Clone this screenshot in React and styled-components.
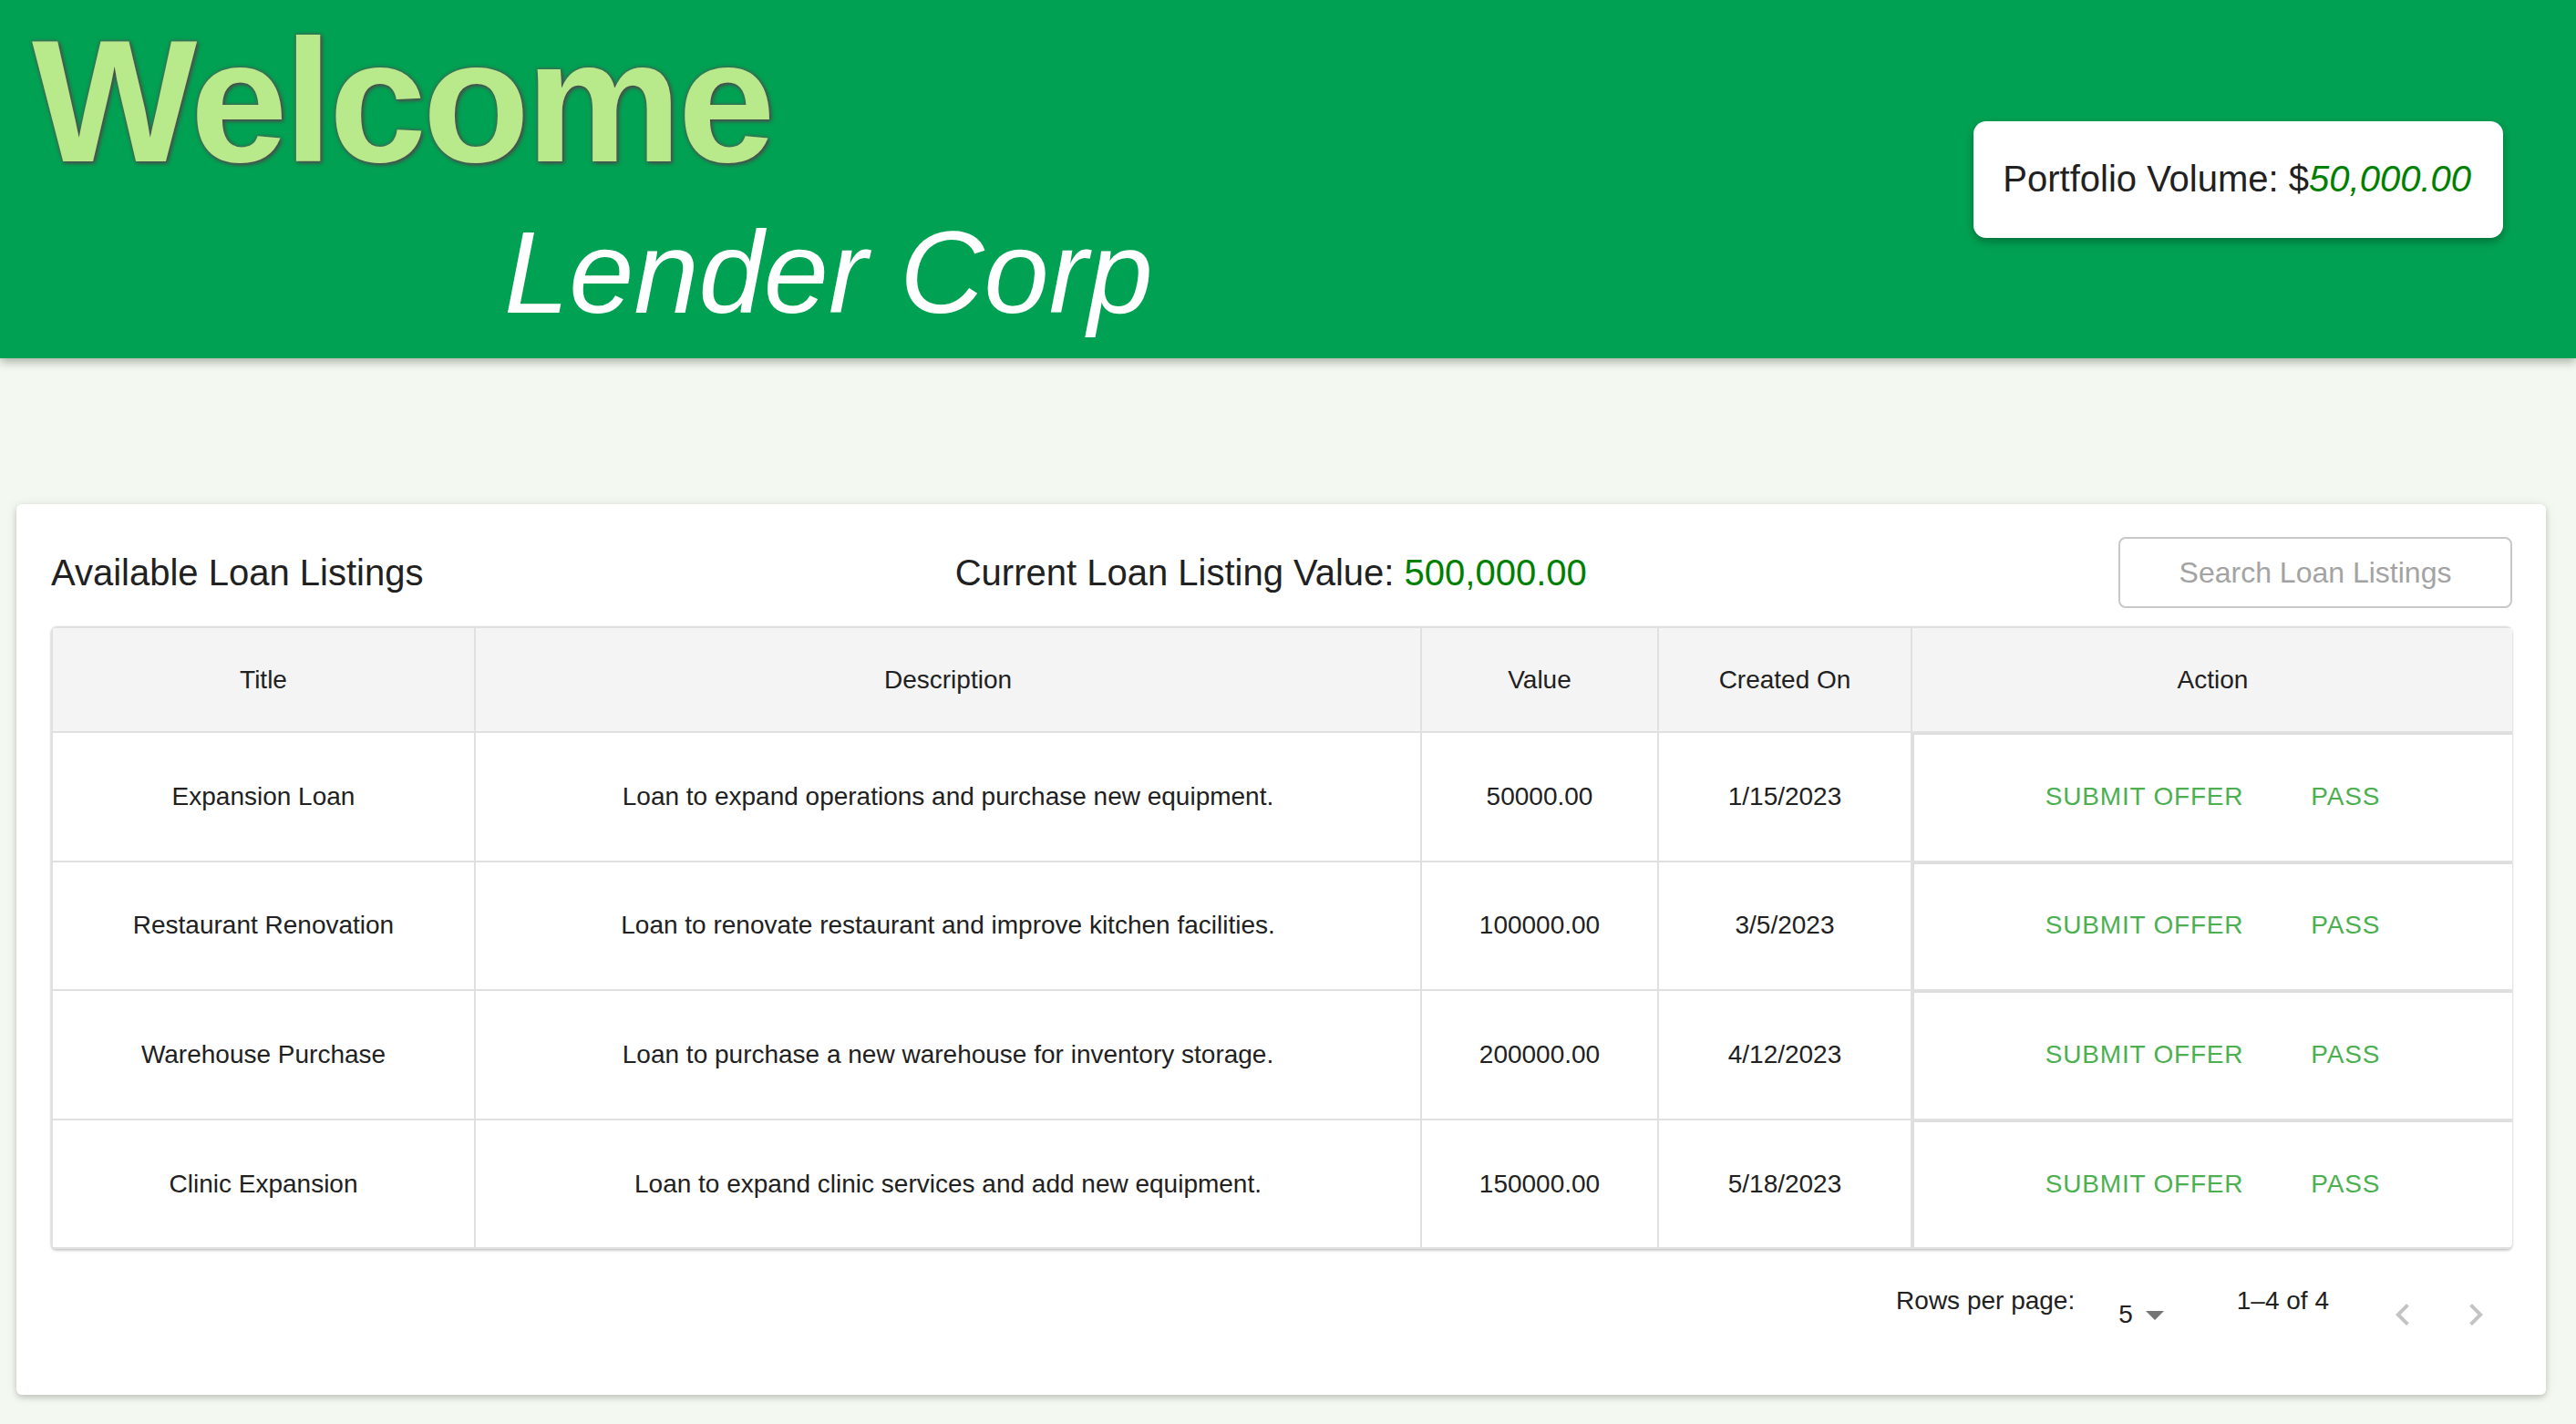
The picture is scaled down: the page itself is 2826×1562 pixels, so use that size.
import React from "react";
import styled, { createGlobalStyle } from "styled-components";

const FONT = `"Liberation Sans", Arial, Helvetica, sans-serif`;

const GlobalStyle = createGlobalStyle`
  html, body {
    margin: 0;
    padding: 0;
    background: #f3f9f0;
  }
  body {
    font-family: ${FONT};
    color: #212121;
  }
  #root {
    min-height: 100vh;
  }
`;

const Page = styled.div`
  min-height: 100vh;
  padding-bottom: 1px;
  box-sizing: border-box;
`;

const Header = styled.header`
  position: relative;
  z-index: 1;
  display: flex;
  align-items: center;
  justify-content: space-between;
  height: 393px;
  box-sizing: border-box;
  padding: 0 80px 0 35px;
  background: #00a152;
  box-shadow: 0 4px 10px rgba(0, 0, 0, 0.3);
`;

const Brand = styled.div`
  display: flex;
  flex-direction: column;
  align-self: stretch;
  padding-top: 15px;
`;

const Welcome = styled.h1`
  margin: 0;
  font-family: ${FONT};
  font-size: 192px;
  line-height: 192px;
  font-weight: 700;
  letter-spacing: -4px;
  color: #b8ea8c;
  text-shadow: 2px 2px 4px #4a4a4a, 0 0 4px #555, 0 0 2px #666;
`;

const Company = styled.div`
  margin: 28px 0 0 518px;
  font-size: 128px;
  line-height: 128px;
  font-style: italic;
  color: #ffffff;
`;

const PortfolioCard = styled.div`
  display: flex;
  align-items: center;
  height: 128px;
  box-sizing: border-box;
  padding: 0 35px 0 32px;
  background: #ffffff;
  border-radius: 14px;
  font-size: 40px;
  color: #212121;
  box-shadow: 0 4px 10px rgba(0, 0, 0, 0.3);
`;

const Money = styled.span`
  color: #008000;
  font-style: ${(p) => (p.$italic ? "italic" : "normal")};
`;

const Panel = styled.section`
  margin: 160px 33px 0 18px;
  padding: 36px 37px 46px 38px;
  background: #ffffff;
  border-radius: 6px;
  box-shadow: 0 3px 6px rgba(0, 0, 0, 0.18), 0 1px 14px rgba(0, 0, 0, 0.08);
`;

const Toolbar = styled.div`
  display: flex;
  align-items: center;
  justify-content: space-between;
  height: 78px;
  margin-bottom: 20px;
`;

const Heading = styled.h2`
  margin: 0;
  font-family: ${FONT};
  font-size: 40px;
  font-weight: 400;
  color: #212121;
`;

const SearchInput = styled.input`
  width: 432px;
  height: 78px;
  box-sizing: border-box;
  border: 2px solid #c8c8c8;
  border-radius: 8px;
  background: #ffffff;
  font-family: ${FONT};
  font-size: 32px;
  text-align: center;
  color: #212121;
  outline: none;
  &::placeholder {
    color: #a3a3a3;
  }
`;

const TableWrap = styled.div`
  border-radius: 6px;
  overflow: hidden;
  box-shadow: 0 2px 3px rgba(0, 0, 0, 0.2), 0 0 2px rgba(0, 0, 0, 0.12);
`;

const Table = styled.table`
  width: 100%;
  border-collapse: collapse;
  table-layout: fixed;
  font-size: 28px;
  color: #212121;
`;

const Th = styled.th`
  height: 113px;
  padding: 0 16px;
  background: #f4f4f4;
  border: 2px solid #e0e0e0;
  font-weight: 400;
  text-align: center;
`;

const Td = styled.td`
  height: 139.6px;
  padding: 0 16px;
  border: 2px solid #e0e0e0;
  text-align: center;
  box-shadow: ${(p) => (p.$action ? "inset 2px 2px 0 #dedede" : "none")};
`;

const ActionGroup = styled.div`
  display: flex;
  justify-content: center;
  align-items: center;
  gap: 42px;
`;

const ActionButton = styled.button`
  padding: 12px 16px;
  border: none;
  border-radius: 8px;
  background: transparent;
  color: #4caf50;
  font-family: ${FONT};
  font-size: 28px;
  font-weight: 500;
  letter-spacing: 0.8px;
  text-transform: uppercase;
  cursor: pointer;
`;

const Pagination = styled.div`
  display: flex;
  justify-content: flex-end;
  align-items: center;
  height: 114px;
  font-size: 28px;
  color: #212121;
`;

const PageLabel = styled.span`
  margin-right: ${(p) => p.$gap}px;
`;

const SelectBox = styled.div`
  display: flex;
  align-items: center;
  padding-top: 30px;
  margin-right: 66px;
  svg {
    display: block;
  }
`;

const NavGroup = styled.div`
  display: flex;
  padding-top: 30px;
`;

const NavButton = styled.button`
  display: flex;
  align-items: center;
  justify-content: center;
  width: 80px;
  height: 80px;
  padding: 0;
  border: none;
  border-radius: 50%;
  background: transparent;
  color: #c4c4c4;
`;

const loans = [
  ["Expansion Loan", "Loan to expand operations and purchase new equipment.", "50000.00", "1/15/2023"],
  ["Restaurant Renovation", "Loan to renovate restaurant and improve kitchen facilities.", "100000.00", "3/5/2023"],
  ["Warehouse Purchase", "Loan to purchase a new warehouse for inventory storage.", "200000.00", "4/12/2023"],
  ["Clinic Expansion", "Loan to expand clinic services and add new equipment.", "150000.00", "5/18/2023"],
];

const widths = [464, 1038, 260, 278, 661];

export default function App() {
  return (
    <Page>
      <GlobalStyle />
      <Header>
        <Brand>
          <Welcome>Welcome</Welcome>
          <Company>Lender Corp</Company>
        </Brand>
        <PortfolioCard>
          Portfolio Volume: $<Money $italic>50,000.00</Money>
        </PortfolioCard>
      </Header>

      <Panel>
        <Toolbar>
          <Heading>Available Loan Listings</Heading>
          <Heading as="div">
            Current Loan Listing Value: <Money>500,000.00</Money>
          </Heading>
          <SearchInput placeholder="Search Loan Listings" />
        </Toolbar>

        <TableWrap>
          <Table>
            <colgroup>
              {widths.map((w, i) => (
                <col key={i} style={{ width: w }} />
              ))}
            </colgroup>
            <thead>
              <tr>
                <Th>Title</Th>
                <Th>Description</Th>
                <Th>Value</Th>
                <Th>Created On</Th>
                <Th>Action</Th>
              </tr>
            </thead>
            <tbody>
              {loans.map(([title, desc, value, date]) => (
                <tr key={title}>
                  <Td>{title}</Td>
                  <Td>{desc}</Td>
                  <Td>{value}</Td>
                  <Td>{date}</Td>
                  <Td $action>
                    <ActionGroup>
                      <ActionButton>Submit Offer</ActionButton>
                      <ActionButton>Pass</ActionButton>
                    </ActionGroup>
                  </Td>
                </tr>
              ))}
            </tbody>
          </Table>
        </TableWrap>

        <Pagination>
          <PageLabel $gap={48}>Rows per page:</PageLabel>
          <SelectBox>
            <span>5</span>
            <svg width="48" height="48" viewBox="0 0 24 24" fill="#757575">
              <path d="M7 10l5 5 5-5z" />
            </svg>
          </SelectBox>
          <PageLabel $gap={41}>1–4 of 4</PageLabel>
          <NavGroup>
            <NavButton disabled aria-label="previous page">
              <svg width="48" height="48" viewBox="0 0 24 24" fill="currentColor">
                <path d="M15.41 16.59L10.83 12l4.58-4.59L14 6l-6 6 6 6 1.41-1.41z" />
              </svg>
            </NavButton>
            <NavButton disabled aria-label="next page">
              <svg width="48" height="48" viewBox="0 0 24 24" fill="currentColor">
                <path d="M8.59 16.59L13.17 12 8.59 7.41 10 6l6 6-6 6-1.41-1.41z" />
              </svg>
            </NavButton>
          </NavGroup>
        </Pagination>
      </Panel>
    </Page>
  );
}
